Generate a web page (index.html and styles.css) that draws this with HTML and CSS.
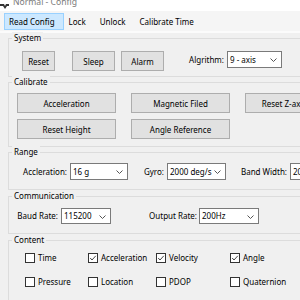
FILE: index.html
```html
<!DOCTYPE html>
<html>
<head>
<meta charset="utf-8">
<link rel="stylesheet" href="styles.css">
</head>
<body>
<div class="window">
  <div class="titlebar">
    <svg class="appicon" width="9" height="8" viewBox="0 0 9 8"><path d="M0 3 L4 3 L5 5 L6 3 L9 3 L9 5 L7 5 L5 8 L3 5 L0 5 Z" fill="#333"/></svg>
    <span class="title">Normal - Config</span>
  </div>
  <div class="menubar">
    <span class="menu-item active">Read Config</span>
    <span class="menu-item">Lock</span>
    <span class="menu-item">Unlock</span>
    <span class="menu-item">Calibrate Time</span>
  </div>
  <div class="menu-edge"></div>

  <div class="content">
    <div class="group g-system">
      <span class="group-title">System</span>
      <div class="row sys-row">
        <button class="btn w33">Reset</button>
        <button class="btn w43 ml17">Sleep</button>
        <button class="btn w43 ml6">Alarm</button>
        <span class="lbl w62">Algrithm:</span>
        <div class="combo w55"><span class="combo-text">9 - axis</span><svg class="chev" width="7" height="4" viewBox="0 0 7 4"><polyline points="0.5,0.5 3.5,3.5 6.5,0.5" fill="none" stroke="#555" stroke-width="1"/></svg></div>
      </div>
    </div>

    <div class="group g-cal">
      <span class="group-title">Calibrate</span>
      <div class="cal-grid">
        <button class="btn">Acceleration</button>
        <button class="btn">Magnetic Filed</button>
        <button class="btn btn-z">Reset Z-axis</button>
        <button class="btn">Reset Height</button>
        <button class="btn">Angle Reference</button>
      </div>
    </div>

    <div class="group g-range">
      <span class="group-title">Range</span>
      <div class="row range-row">
        <span class="lbl w49">Accleration:</span>
        <div class="combo w58"><span class="combo-text">16 g</span><svg class="chev" width="7" height="4" viewBox="0 0 7 4"><polyline points="0.5,0.5 3.5,3.5 6.5,0.5" fill="none" stroke="#555" stroke-width="1"/></svg></div>
        <span class="lbl w36">Gyro:</span>
        <div class="combo w59"><span class="combo-text">2000 deg/s</span><svg class="chev" width="7" height="4" viewBox="0 0 7 4"><polyline points="0.5,0.5 3.5,3.5 6.5,0.5" fill="none" stroke="#555" stroke-width="1"/></svg></div>
        <span class="lbl w61">Band Width:</span>
        <div class="combo w60"><span class="combo-text">20 Hz</span><svg class="chev" width="7" height="4" viewBox="0 0 7 4"><polyline points="0.5,0.5 3.5,3.5 6.5,0.5" fill="none" stroke="#555" stroke-width="1"/></svg></div>
      </div>
    </div>

    <div class="group g-comm">
      <span class="group-title">Communication</span>
      <div class="row comm-row">
        <span class="lbl w49">Baud Rate:</span>
        <div class="combo w50 h16"><span class="combo-text">115200</span><svg class="chev" width="7" height="4" viewBox="0 0 7 4"><polyline points="0.5,0.5 3.5,3.5 6.5,0.5" fill="none" stroke="#555" stroke-width="1"/></svg></div>
        <span class="lbl w86 mr2">Output Rate:</span>
        <div class="combo w60 h16"><span class="combo-text">200Hz</span><svg class="chev" width="7" height="4" viewBox="0 0 7 4"><polyline points="0.5,0.5 3.5,3.5 6.5,0.5" fill="none" stroke="#555" stroke-width="1"/></svg></div>
      </div>
    </div>

    <div class="group g-content">
      <span class="group-title">Content</span>
      <div class="check-grid">
        <label class="chk"><span class="box"></span>Time</label>
        <label class="chk"><span class="box"><svg width="8" height="8" viewBox="0 0 8 8"><polyline points="1.2,4 3,6 6.8,1.8" fill="none" stroke="#333" stroke-width="0.9"/></svg></span>Acceleration</label>
        <label class="chk"><span class="box"><svg width="8" height="8" viewBox="0 0 8 8"><polyline points="1.2,4 3,6 6.8,1.8" fill="none" stroke="#333" stroke-width="0.9"/></svg></span>Velocity</label>
        <label class="chk"><span class="box"><svg width="8" height="8" viewBox="0 0 8 8"><polyline points="1.2,4 3,6 6.8,1.8" fill="none" stroke="#333" stroke-width="0.9"/></svg></span>Angle</label>
        <label class="chk"><span class="box"></span>Pressure</label>
        <label class="chk"><span class="box"></span>Location</label>
        <label class="chk"><span class="box"></span>PDOP</label>
        <label class="chk"><span class="box"></span>Quaternion</label>
      </div>
    </div>
  </div>
</div>
</body>
</html>
```

FILE: styles.css
```css
html, body {
  margin: 0;
  padding: 0;
  width: 300px;
  height: 300px;
  overflow: hidden;
  background: #f0f0f0;
}

.window {
  width: 300px;
  height: 300px;
  overflow: hidden;
  font-family: "Noto Sans", "Open Sans", sans-serif;
  font-size: 8px;
  color: #000;
}

.titlebar {
  height: 11px;
  background: #ffffff;
  display: flex;
  align-items: flex-start;
  overflow: hidden;
}

.appicon {
  margin-top: 1px;
  flex: none;
}

.title {
  margin-left: 4px;
  margin-top: -5px;
  font-size: 8.6px;
  line-height: 14px;
  color: #7a7a7a;
  white-space: nowrap;
}

.menubar {
  height: 20px;
  background: #f5f5f5;
  display: flex;
  align-items: flex-start;
  padding-left: 4px;
}

.menu-item {
  height: 15px;
  margin-top: 2px;
  padding: 0 8px 0 4px;
  line-height: 15px;
  border: 1px solid transparent;
  white-space: nowrap;
}

.menu-item.active {
  background: #cce8ff;
  border-color: #99d1ff;
}

.menu-edge {
  height: 2px;
  background: #fbfbfb;
}

.content {
  padding-top: 5px;
}

.group {
  margin-left: 8px;
  width: 340px;
  border: 1px solid #dcdcdc;
  box-sizing: border-box;
}

.group-title {
  display: block;
  width: fit-content;
  height: 12px;
  line-height: 12px;
  margin: -7px 0 0 3px;
  padding: 0 2px;
  background: #f0f0f0;
  white-space: nowrap;
}

.g-system { height: 39px; }
.g-cal { height: 65px; margin-top: 5px; }
.g-range { height: 38px; margin-top: 5px; }
.g-comm { height: 38px; margin-top: 6px; }
.g-content { height: 80px; margin-top: 6px; }

.row {
  display: flex;
  align-items: flex-start;
}

.sys-row { margin-top: 7px; padding-left: 13px; }
.range-row { margin-top: 5px; padding-left: 9px; }
.comm-row { margin-top: 6px; padding-left: 0; }

.btn {
  font: inherit;
  color: #000;
  height: 20px;
  padding: 0;
  margin: 0;
  background: #e1e1e1;
  border: 1px solid #adadad;
  box-sizing: border-box;
  white-space: nowrap;
}

.btn-z { width: 78px; }

.cal-grid {
  display: grid;
  grid-template-columns: 99px 99px 99px;
  grid-auto-rows: 20px;
  column-gap: 15px;
  row-gap: 6px;
  margin-top: 5px;
  padding-left: 8px;
}

.lbl {
  text-align: right;
  margin-right: 3px;
  line-height: 17px;
  white-space: nowrap;
}

.combo {
  height: 17px;
  background: #fff;
  border: 1px solid #7a7a7a;
  box-sizing: border-box;
  display: flex;
  align-items: center;
  justify-content: space-between;
  padding: 0 4px 0 2px;
  overflow: hidden;
  flex: none;
}

.combo-text { white-space: nowrap; line-height: 14px; }
.chev { flex: none; margin-top: 1px; margin-left: 1px; }

.h16 { height: 16px; }
.comm-row .lbl { line-height: 16px; }

.w33 { width: 33px; flex: none; }
.w36 { width: 36px; flex: none; }
.w43 { width: 43px; flex: none; }
.w49 { width: 49px; flex: none; }
.w50 { width: 50px; }
.w55 { width: 55px; }
.w58 { width: 58px; }
.w59 { width: 59px; }
.w60 { width: 60px; }
.w61 { width: 61px; flex: none; }
.w62 { width: 60px; flex: none; }
.w86 { width: 86px; flex: none; }
.ml17 { margin-left: 17px; }
.ml6 { margin-left: 6px; }
.mr2 { margin-right: 2px; }

.check-grid {
  display: grid;
  grid-template-columns: 63px 68px 74px 80px;
  grid-auto-rows: 12px;
  row-gap: 12px;
  margin-top: 6px;
  padding-left: 16px;
}

.chk {
  display: flex;
  align-items: center;
  white-space: nowrap;
  line-height: 12px;
}

.box {
  width: 10px;
  height: 10px;
  box-sizing: border-box;
  border: 1px solid #333;
  background: #fff;
  margin-right: 3px;
  display: flex;
  align-items: center;
  justify-content: center;
  flex: none;
}
```
